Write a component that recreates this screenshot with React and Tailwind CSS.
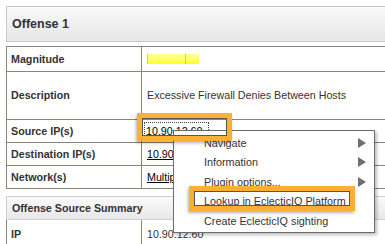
const font = { fontFamily: '"Liberation Sans", Arial, sans-serif' };

const rows = [
  { label: "Magnitude", h: "h-[25px]", kind: "bar" },
  { label: "Description", h: "h-[48px]", value: "Excessive Firewall Denies Between Hosts" },
  { label: "Source IP(s)", h: "h-[23px]", value: "10.90.12.60", link: true, focused: true },
  { label: "Destination IP(s)", h: "h-[23px]", value: "10.90.12.60", link: true },
  { label: "Network(s)", h: "h-[23px]", value: "Multiple (2)", link: true },
];

const menuItems = [
  { label: "Navigate", sub: true },
  { label: "Information", sub: true },
  { label: "Plugin options...", sub: true },
  { label: "Lookup in EclecticIQ Platform" },
  { label: "Create EclecticIQ sighting" },
];

function Arrow() {
  return (
    <svg width="8" height="10" viewBox="0 0 8 10" className="shrink-0">
      <path d="M0 0 L8 5 L0 10 Z" fill="#6f6f6f" />
    </svg>
  );
}

function MagnitudeBar() {
  return (
    <div className="flex h-[10px] border-l border-[#c9c9a0]">
      <div className="w-[38px] bg-gradient-to-b from-[#ffff9a] to-[#ffff00] border-r border-[#c8c8a8]" />
      <div className="w-[13px] bg-gradient-to-b from-[#ffff9a] to-[#ffff00]" />
    </div>
  );
}

function ContextMenu() {
  return (
    <div className="absolute left-[173px] top-[130px] w-[202px] h-[103px] bg-white border border-[#6b6b6b] shadow-[2px_2px_3px_rgba(0,0,0,0.25)] py-[2px] z-10">
      {menuItems.map((item) => (
        <div
          key={item.label}
          className="h-[19.6px] flex items-center justify-between pl-[30px] pr-[8px] text-[10.8px] text-[#333]"
        >
          <span>{item.label}</span>
          {item.sub && <Arrow />}
        </div>
      ))}
    </div>
  );
}

// orange highlight frame drawn over the screenshot
function Callout({ className }) {
  return (
    <div
      className={`absolute border-[5px] border-[#fbb034] shadow-[-1px_2px_3px_rgba(0,0,0,0.3)] z-20 ${className}`}
    >
      <div className="w-full h-full border border-[#555]" />
    </div>
  );
}

export default function App() {
  return (
    <div style={font} className="relative w-[385px] h-[244px] overflow-hidden bg-white">
      <div className="w-[420px] pl-[6px] pt-[6px]">
        <div className="h-[36px] flex items-center pl-[5px] border border-[#c9c9c9] bg-gradient-to-b from-[#fafafa] to-[#e6e6e6] text-[12.5px] font-bold text-[#333]">
          Offense 1
        </div>

        <div className="mt-[4px] border-t border-l border-r border-[#8c8474]">
          {rows.map((row) => (
            <div key={row.label} className={`flex ${row.h} border-b border-[#8c8474]`}>
              <div className="w-[135px] shrink-0 flex items-center pl-[4px] border-r border-[#8c8474] text-[10.7px] font-bold text-[#333]">
                {row.label}
              </div>
              <div className="flex-1 flex items-center pl-[5px] text-[10.7px] text-[#333]">
                {row.kind === "bar" ? (
                  <MagnitudeBar />
                ) : row.link ? (
                  <span
                    className={`underline text-black ${
                      row.focused ? "outline outline-1 outline-dotted outline-[#444] -ml-[2px] pl-[1px] pr-[6px]" : ""
                    }`}
                  >
                    {row.value}
                  </span>
                ) : (
                  <span>{row.value}</span>
                )}
              </div>
            </div>
          ))}
        </div>

        <div className="mt-[7px] h-[24px] flex items-center pl-[5px] border border-[#cfcfcf] bg-gradient-to-b from-[#fafafa] to-[#e8e8e8] text-[10.7px] font-bold text-[#333]">
          Offense Source Summary
        </div>
        <div className="flex h-[28px] border-l border-r border-[#8c8474]">
          <div className="w-[135px] shrink-0 flex items-center pl-[4px] border-r border-[#8c8474] text-[10.7px] font-bold text-[#333]">
            IP
          </div>
          <div className="flex-1 flex items-center pl-[5px] text-[10.7px] text-[#333]">10.90.12.60</div>
        </div>
      </div>

      <ContextMenu />

      <Callout className="left-[137px] top-[113px] w-[95px] h-[28px]" />
      <Callout className="left-[189px] top-[186px] w-[166px] h-[25px]" />
    </div>
  );
}
